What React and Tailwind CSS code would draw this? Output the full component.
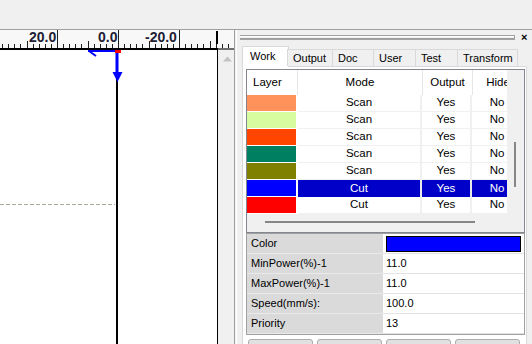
const layers = [
  { color: '#ff915a', mode: 'Scan' },
  { color: '#d7fca0', mode: 'Scan' },
  { color: '#ff4500', mode: 'Scan' },
  { color: '#008060', mode: 'Scan' },
  { color: '#808000', mode: 'Scan' },
  { color: '#0000ff', mode: 'Cut', selected: true },
  { color: '#ff0000', mode: 'Cut' },
];

const props = [
  { label: 'Color', swatch: '#0000ff' },
  { label: 'MinPower(%)-1', value: '11.0' },
  { label: 'MaxPower(%)-1', value: '11.0' },
  { label: 'Speed(mm/s):', value: '100.0' },
  { label: 'Priority', value: '13' },
];

const tabs = [
  { name: 'Work', w: 'w-[47px]', active: true },
  { name: 'Output', w: 'w-[45px]' },
  { name: 'Doc', w: 'w-[41px]' },
  { name: 'User', w: 'w-[42px]' },
  { name: 'Test', w: 'w-[42px]' },
  { name: 'Transform', w: 'w-[61px]' },
];

const Ruler = () => {
  const ticks = [];
  for (let k = -20; k <= 19; k++) {
    const x = Math.round(118 + k * 6.1) + 0.5;
    if (x < 0 || x > 234) continue;
    const y1 = k % 10 === 0 ? 0 : k % 5 === 0 ? 11 : 14;
    ticks.push(<line key={k} x1={x} x2={x} y1={y1} y2={18} stroke="#202020" strokeWidth="1" />);
  }
  return (
    <div className="relative h-[18px] shrink-0 bg-[#f8f8f8] text-[#202034] font-bold text-[14px] leading-none">
      <svg width="234" height="18" className="absolute inset-0">
        {ticks}
        <rect x="216" y="1" width="2" height="13" fill="#000" />
      </svg>
      <span className="absolute left-[29px] top-0">20.0</span>
      <span className="absolute left-[98px] top-0">0.0</span>
      <span className="absolute left-[145px] top-0">-20.0</span>
    </div>
  );
};

const Canvas = () => (
  <div className="relative w-[218px] bg-white border-r border-black">
    <svg width="217" height="294" className="absolute inset-0">
      <line x1="0" x2="115" y1="154.5" y2="154.5" stroke="#a8a896" strokeDasharray="4 2" />
      <rect x="116" y="0" width="2" height="294" fill="#000" />
      <rect x="88" y="0" width="30" height="2" fill="#0000ff" />
      <line x1="89" y1="1" x2="96" y2="6" stroke="#0000ff" strokeWidth="2" />
      <rect x="115.5" y="2" width="3" height="24" fill="#0000ff" />
      <polygon points="112.5,22 122.5,22 117.5,32" fill="#0000ff" />
      <rect x="115" y="0" width="6" height="3" fill="#ff0000" />
    </svg>
  </div>
);

const LayerTable = () => (
  <div className="w-[279px] h-[164px] border border-[#828790] flex">
    <div className="w-[260px] flex flex-col">
      <div className="h-[144px] bg-white overflow-hidden">
        <div className="w-[277px] text-[11.5px]">
          <div className="flex h-[25px] items-center">
            <div className="w-[51px] h-full flex items-center pl-[6px] border-r border-[#e6e6e6]">Layer</div>
            <div className="w-[125px] h-full flex items-center justify-center border-r border-[#e6e6e6]">Mode</div>
            <div className="w-[50px] h-full flex items-center justify-center border-r border-[#e6e6e6]">Output</div>
            <div className="w-[50px] h-full flex items-center justify-center">Hide</div>
          </div>
          {layers.map((l, i) => (
            <div key={i} className="flex h-[17px]">
              <div className="w-[51px] h-full border-r-2 border-b border-white" style={{ backgroundColor: l.color }} />
              <div className={l.selected ? 'w-[124px] h-full flex items-center justify-center bg-[#0000c8] text-white border-r-2 border-[#e8e8e8]' : 'w-[124px] h-full flex items-center justify-center border-r-2 border-b border-[#f0f0f0]'}>{l.mode}</div>
              <div className={l.selected ? 'w-[50px] h-full flex items-center justify-center bg-[#0000c8] text-white border-r-2 border-[#e8e8e8]' : 'w-[50px] h-full flex items-center justify-center border-r-2 border-b border-[#f0f0f0]'}>Yes</div>
              <div className={l.selected ? 'w-[50px] h-full flex items-center justify-center bg-[#0000c8] text-white' : 'w-[50px] h-full flex items-center justify-center border-b border-[#f0f0f0]'}>No</div>
            </div>
          ))}
        </div>
      </div>
      <div className="flex-1 bg-[#f0f0f0] pt-[7px] pl-[18px]">
        <div className="w-[210px] h-[2px] bg-[#868686]" />
      </div>
    </div>
    <div className="flex-1 bg-[#f0f0f0] pt-[72px] pl-[7px]">
      <div className="w-[2px] h-[45px] bg-[#868686]" />
    </div>
  </div>
);

const PropertyGrid = () => (
  <div className="w-[279px] border border-[#a0a0a0] flex flex-col bg-white">
    {props.map((p) => (
      <div key={p.label} className="flex h-[20px]">
        <div className="w-[136px] h-full bg-[#dadada] border-b border-[#eaeaea] flex items-center pl-[4px]">{p.label}</div>
        <div className="flex-1 h-full border-b border-[#e3e3e3] flex items-center pl-[3px]">
          {p.swatch ? (
            <div className="w-[135px] h-[16px] border border-black" style={{ backgroundColor: p.swatch }} />
          ) : (
            p.value
          )}
        </div>
      </div>
    ))}
  </div>
);

export default function App() {
  return (
    <div className="w-[532px] h-[344px] overflow-hidden bg-[#f0f0f0] flex flex-col font-['Liberation_Sans',Arial,sans-serif] text-[11px] text-black">
      <div className="h-[30px] border-b border-[#a0a0a0] shrink-0" />
      <div className="flex-1 flex min-h-0">
        <div className="w-[234px] flex flex-col">
          <Ruler />
          <div className="flex h-[2px] shrink-0">
            <div className="w-[218px] bg-black" />
            <div className="flex-1 bg-[#707070]" />
          </div>
          <div className="flex-1 flex min-h-0">
            <Canvas />
            <div className="flex-1 flex justify-center pt-[6px] pl-[2px]">
              <svg width="9" height="6">
                <polygon points="0,5.5 4.5,0.5 9,5.5" fill="#c2c2c2" />
              </svg>
            </div>
          </div>
        </div>
        <div className="w-[3px] border-l border-[#a0a0a0] border-r border-r-white" />
        <div className="flex-1 flex flex-col min-h-0">
          <div className="h-[16px] shrink-0 flex items-start pt-[5px] pl-[3px]">
            <div className="w-[275px] h-[5px] border-t border-b border-r border-[#a0a0a0] flex flex-col">
              <div className="h-[1px] bg-white" />
              <div className="h-[1px]" />
              <div className="h-[1px] bg-[#a0a0a0]" />
            </div>
            <span className="ml-[6px] -mt-[3px] font-bold text-[11px] leading-none">×</span>
          </div>
          <div className="h-[20px] shrink-0 flex items-end pl-[5px] relative z-10">
            {tabs.map((t) =>
              t.active ? (
                <div key={t.name} className={`${t.w} h-[21px] -mb-[1px] -mr-[2px] bg-white border-t border-l border-r border-[#d9d9d9] flex items-center pl-[7px] pb-[1px]`}>
                  {t.name}
                </div>
              ) : (
                <div key={t.name} className={`${t.w} h-[17px] bg-[#f0f0f0] border-t border-l border-[#d9d9d9] last:border-r flex items-center pl-[5px]`}>
                  {t.name}
                </div>
              )
            )}
          </div>
          <div className="flex-1 min-h-0 overflow-hidden ml-[5px] mr-[5px] bg-white border-t border-l border-r border-[#d9d9d9] pt-[2px] pl-[3px]">
            <LayerTable />
            <PropertyGrid />
            <div className="flex gap-[4px] mt-[4px] pl-[2px]">
              {[0, 1, 2, 3].map((b) => (
                <div key={b} className="w-[65px] h-[20px] rounded-[3px] border border-[#adadad] bg-[#e1e1e1]" />
              ))}
            </div>
          </div>
        </div>
      </div>
    </div>
  );
}
